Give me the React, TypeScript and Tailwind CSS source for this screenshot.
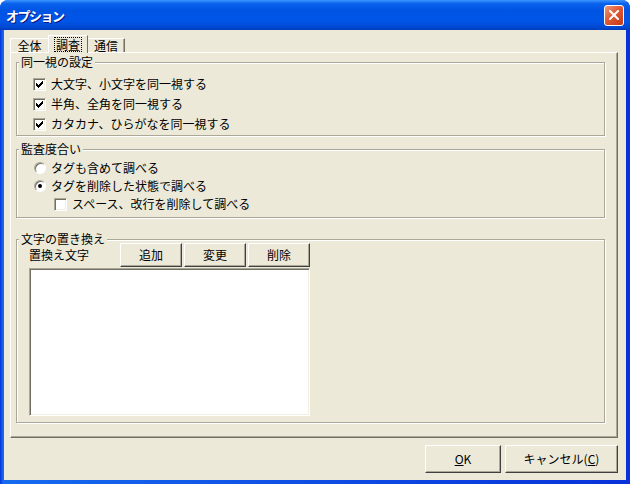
import type { ReactNode } from "react";

const font = "font-['Noto_Sans_CJK_JP',sans-serif]";

function CheckBox({ checked }: { checked: boolean }) {
  return (
    <span className="flex h-[13px] w-[13px] shrink-0 items-center justify-center border border-t-[#ACA899] border-l-[#ACA899] border-b-white border-r-white bg-white shadow-[inset_1px_1px_0_#716F64,inset_-1px_-1px_0_#F1EFE2]">
      {checked && (
        <svg width="7" height="7" viewBox="0 0 7 7" shapeRendering="crispEdges">
          {[2, 3, 4, 3, 2, 1, 0].map((y, x) => (
            <rect key={x} x={x} y={y} width="1" height="3" fill="#000" />
          ))}
        </svg>
      )}
    </span>
  );
}

function Radio({ checked }: { checked: boolean }) {
  return (
    <span className="flex h-[12px] w-[12px] shrink-0 items-center justify-center rounded-full border border-t-[#ACA899] border-l-[#ACA899] border-b-white border-r-white bg-white shadow-[inset_1px_1px_0_#716F64]">
      {checked && <span className="h-[4px] w-[4px] rounded-full bg-black" />}
    </span>
  );
}

function Btn({ children, className }: { children: ReactNode; className: string }) {
  return (
    <button
      className={`flex shrink-0 items-center justify-center border border-t-white border-l-white border-b-[#404040] border-r-[#404040] bg-[#ECE9D8] text-[12px] leading-none text-black shadow-[inset_-1px_-1px_0_#ACA899] ${className}`}
    >
      {children}
    </button>
  );
}

function Group({ title, className, children }: { title: string; className: string; children: ReactNode }) {
  return (
    <fieldset
      className={`w-[589px] border border-[#ACA899] shadow-[inset_1px_1px_0_#fff,1px_1px_0_#fff] ${className}`}
    >
      <legend className="ml-[2px] h-[14px] bg-[#ECE9D8] px-[2px] text-[12px] leading-[14px]">{title}</legend>
      {children}
    </fieldset>
  );
}

export default function App() {
  return (
    <div className={`flex h-[484px] w-[630px] flex-col overflow-hidden rounded-t-[8px] bg-[linear-gradient(to_right,#0831D9,#166AEE_3px,#0831D9)] text-black ${font}`}>
      {/* title bar */}
      <div className="flex h-[30px] shrink-0 items-center justify-between bg-[linear-gradient(to_bottom,#3D95FF_0%,#0A62EC_12%,#0054E3_35%,#0055E8_70%,#0048D0_92%,#003BB8_100%)] pl-[6px] pr-[6px]">
        <span className="text-[13px] font-bold leading-none tracking-[-1.5px] text-white [text-shadow:1px_1px_0_#0A1883]">
          オプション
        </span>
        <span className="flex h-[21px] w-[20px] items-center justify-center rounded-[3px] border border-white bg-[linear-gradient(135deg,#F09A7A,#E05A35_45%,#C23A16)]">
          <svg width="10" height="10" viewBox="0 0 10 10">
            <path d="M1 1 L9 9 M9 1 L1 9" stroke="#fff" strokeWidth="2" strokeLinecap="square" />
          </svg>
        </span>
      </div>

      {/* client area */}
      <div className="mx-[4px] mb-[4px] flex flex-1 flex-col bg-[#ECE9D8]">
        {/* tabs */}
        <div className="flex h-[22px] items-end pl-[6px] pt-[5px]">
          <div className="flex h-[14px] w-[38px] items-center justify-center border-t border-l border-white text-[12px] leading-none">
            全体
          </div>
          <div className="relative z-10 -mb-[1px] flex h-[18px] w-[40px] items-start justify-center border-t border-l border-r border-t-white border-l-white border-r-[#716F64] bg-[#ECE9D8] pt-[1px]">
            <span className="border border-dotted border-black px-[1px] text-[12px] leading-[13px]">調査</span>
          </div>
          <div className="flex h-[14px] w-[37px] items-center justify-center border-t border-r border-t-white border-r-[#716F64] text-[12px] leading-none shadow-[inset_-1px_0_0_#ACA899]">
            通信
          </div>
        </div>

        {/* tab panel */}
        <div className="ml-[6px] flex h-[386px] w-[608px] flex-col border border-t-white border-l-white border-b-[#716F64] border-r-[#716F64] pl-[5px] pt-[2px] shadow-[inset_-1px_-1px_0_#ACA899]">
          <Group title="同一視の設定" className="pb-[1px]">
            <div className="flex flex-col pt-[5px] text-[12px] leading-none">
              {["大文字、小文字を同一視する", "半角、全角を同一視する", "カタカナ、ひらがなを同一視する"].map((t) => (
                <div key={t} className="flex h-[20px] items-center gap-[5px] pl-[16px]">
                  <CheckBox checked />
                  <span>{t}</span>
                </div>
              ))}
            </div>
          </Group>

          <Group title="監査度合い" className="mt-[6px] pb-[4px]">
            <div className="flex flex-col pt-[3px] text-[12px] leading-none">
              <div className="flex h-[18px] items-center gap-[5px] pl-[17px]">
                <Radio checked={false} />
                <span>タグも含めて調べる</span>
              </div>
              <div className="flex h-[18px] items-center gap-[5px] pl-[17px]">
                <Radio checked />
                <span>タグを削除した状態で調べる</span>
              </div>
              <div className="flex h-[18px] items-center gap-[5px] pl-[37px]">
                <CheckBox checked={false} />
                <span>スペース、改行を削除して調べる</span>
              </div>
            </div>
          </Group>

          <Group title="文字の置き換え" className="mt-[14px] pb-[6px]">
            <div className="-mt-[3px] flex flex-col pl-[12px]">
              <div className="flex h-[24px] items-center text-[12px] leading-none">
                <span className="w-[91px]">置換え文字</span>
                <div className="flex gap-[2px]">
                  <Btn className="h-[24px] w-[62px]">追加</Btn>
                  <Btn className="h-[24px] w-[62px]">変更</Btn>
                  <Btn className="h-[24px] w-[62px]">削除</Btn>
                </div>
              </div>
              <div className="mt-[1px] h-[148px] w-[281px] border border-t-[#ACA899] border-l-[#ACA899] border-b-white border-r-white bg-white shadow-[inset_1px_1px_0_#716F64,inset_-1px_-1px_0_#F1EFE2]" />
            </div>
          </Group>
        </div>

        {/* footer */}
        <div className="flex justify-end gap-[4px] pr-[8px] pt-[7px]">
          <Btn className="h-[28px] w-[76px]">
            <span className="underline underline-offset-1">O</span>K
          </Btn>
          <Btn className="h-[28px] w-[113px]">
            キャンセル(<span className="underline underline-offset-1">C</span>)
          </Btn>
        </div>
      </div>
    </div>
  );
}
